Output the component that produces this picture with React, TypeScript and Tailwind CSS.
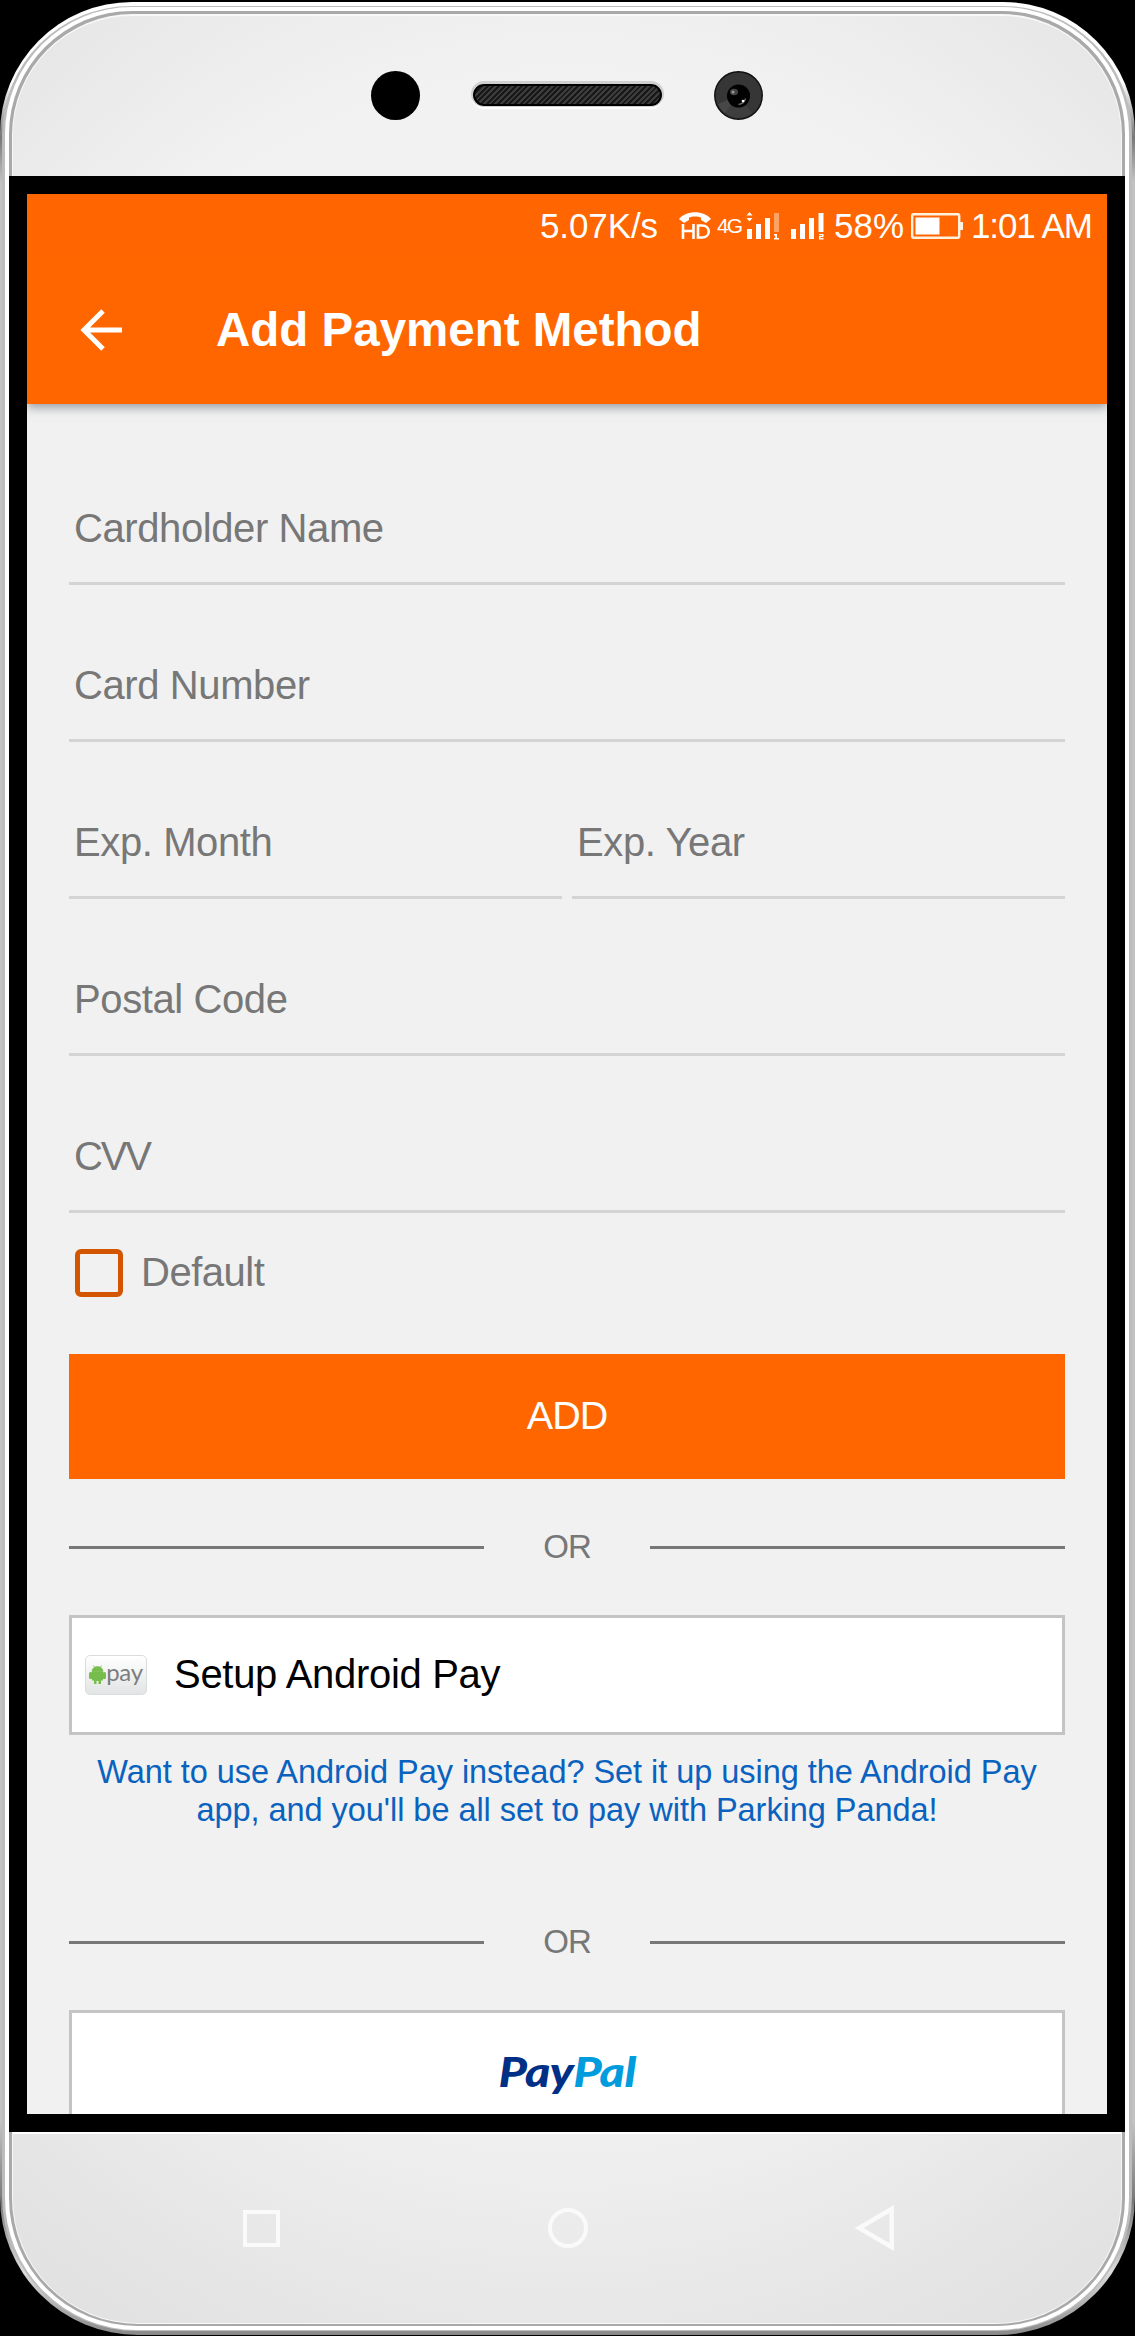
import React from "react";

function Field({ label, tight = false }: { label: string; tight?: boolean }) {
  return (
    <label className="flex h-[157px] w-full flex-col justify-end border-b-[3px] border-[#d4d4d4] pb-[34px]">
      <span
        className={
          tight
            ? "whitespace-nowrap pl-[5px] text-[40px] leading-[40px] tracking-[-2.200px] text-[#777777]"
            : "whitespace-nowrap pl-[5px] text-[40px] leading-[40px] tracking-[-0.400px] text-[#777777]"
        }
      >
        {label}
      </span>
    </label>
  );
}

function OrDivider() {
  return (
    <div className="flex h-[40px] items-center">
      <div className="h-[3px] flex-1 bg-[#777777]" />
      <span className="w-[166px] text-center text-[33px] leading-[40px] tracking-[-1px] text-[#777777]">
        OR
      </span>
      <div className="h-[3px] flex-1 bg-[#777777]" />
    </div>
  );
}

function HdCallIcon() {
  return (
    <svg width="32" height="28" viewBox="0 0 32 28">
      <path d="M0 7C7-2 25-2 32 7l-5 4-5-3V5.500C19 4 13 4 10 5.500V8l-5 3z" fill="#fff" />
      <path d="M4 12v15M14.500 12v15M4 19h10.500M19 13.500h4c9 0 9 12 0 12h-4z" fill="none" stroke="#fff" strokeWidth="2.600" />
    </svg>
  );
}

function SignalOne() {
  return (
    <svg width="33" height="28" viewBox="0 0 33 28" fill="#fff">
      <path d="M3.500 0 6.500 3.500H.5zM3.500 9.500 6.500 6H.5z" />
      <path d="M1 17h5v10H1zM10 12h5v15h-5zM19 6h5v21h-5z" />
      <path d="M28 1h5v19h-5z" opacity=".4" />
      <path d="M28 22h3v4h2v1.500h-5V26h1.200v-2.500H28z" />
    </svg>
  );
}

function SignalTwo() {
  return (
    <svg width="33" height="28" viewBox="0 0 33 28" fill="#fff">
      <path d="M0 17h5v10H0zM9 12h5v15H9zM18 6h5v21h-5zM27.500 1h5v19h-5z" />
      <path d="M28 22h4.500v3H29.500v1h3v1.500H28v-3.500h3v-.7h-3z" />
    </svg>
  );
}

function BatteryIcon() {
  return (
    <svg width="52" height="26" viewBox="0 0 52 26">
      <rect x="1.200" y="1.200" width="47" height="23.600" rx="1.500" fill="none" stroke="#fff3e0" strokeWidth="2.400" />
      <path d="M49 9h3v8h-3z" fill="#fff3e0" />
      <rect x="4.500" y="4.500" width="24" height="17" fill="#fff" />
    </svg>
  );
}

function StatusBar() {
  return (
    <div className="flex h-[63px] items-center bg-[#ff6500] pl-[513px] text-[35px] leading-[62px] text-white">
      <span className="w-[139px] whitespace-nowrap tracking-[-0.1px]">5.07K/s</span>
      <HdCallIcon />
      <span className="ml-[6px] w-[29px] whitespace-nowrap text-[21px] leading-[62px] tracking-[-2px]">4G</span>
      <SignalOne />
      <span className="w-[12px]" />
      <SignalTwo />
      <span className="ml-[10px] w-[77px] whitespace-nowrap">58%</span>
      <BatteryIcon />
      <span className="ml-[8px] whitespace-nowrap tracking-[-1.1px]">1:01 AM</span>
    </div>
  );
}

function AppBar() {
  return (
    <header className="relative z-10 bg-[#ff6600] shadow-[0_3px_10px_rgba(50,60,75,0.5)]">
      <StatusBar />
      <div className="flex h-[147px] items-center pb-px pl-[53px]">
        <svg width="43" height="42" viewBox="0 0 43 42" fill="none" stroke="#fff" strokeWidth="5">
          <path d="M42 21H4M23 2 4 21l19 19" />
        </svg>
        <h1 className="ml-[93px] whitespace-nowrap text-[47.500px] font-bold leading-[60px] text-white">
          Add Payment Method
        </h1>
      </div>
    </header>
  );
}

function AndroidPayBadge() {
  return (
    <div className="flex h-[40px] w-[62px] items-center justify-center rounded-[5px] border border-[#dadddd] bg-gradient-to-b from-white to-[#e2e5e5]">
      <svg width="17" height="20" viewBox="0 0 17 20" fill="#76bd4d">
        <path d="M3 6.500C3 0 14 0 14 6.500zM4.500.500 6 3M12.500.500 11 3" stroke="#76bd4d" strokeWidth=".8" />
        <path d="M3 7h11v8.500H12V19H9.500v-3h-2v3H5v-3.500H3z" />
        <rect x="0" y="7" width="3.500" height="7" rx="1.500" />
        <rect x="13.500" y="7" width="3.500" height="7" rx="1.500" />
      </svg>
      <span className="pb-[6px] font-['Lato'] text-[24px] leading-[22px] tracking-[-0.3px] text-[#7d7d7d]">pay</span>
    </div>
  );
}

function PaymentScreen() {
  return (
    <div className="flex h-[1920px] flex-col overflow-hidden bg-[#f1f1f1]">
      <AppBar />
      <main className="flex shrink-0 flex-col px-[42px] pt-[24px]">
        <Field label="Cardholder Name" />
        <Field label="Card Number" />
        <div className="flex gap-[10px]">
          <Field label="Exp. Month" />
          <Field label="Exp. Year" />
        </div>
        <Field label="Postal Code" />
        <Field label="CVV" tight />
        <div className="mt-[36px] flex h-[48px] items-center pl-[6px]">
          <div className="h-[48px] w-[48px] rounded-[6px] border-[5.500px] border-[#d45500]" />
          <span className="pb-[3px] pl-[18px] text-[40px] leading-[40px] tracking-[-0.5px] text-[#777777]">Default</span>
        </div>
        <button className="mt-[57px] h-[125px] bg-[#ff6600] pb-[3px] text-[39.500px] leading-[40px] tracking-[-1px] text-white">
          ADD
        </button>
        <div className="mt-[48px]">
          <OrDivider />
        </div>
        <div className="mt-[48px] flex h-[120px] items-center border-[3px] border-[#c4c4c4] bg-white pl-[13px]">
          <AndroidPayBadge />
          <span className="pb-[3px] pl-[27px] text-[40px] leading-[40px] tracking-[-0.3px] text-black">Setup Android Pay</span>
        </div>
        <p className="mt-[19px] whitespace-nowrap text-center text-[32.500px] leading-[37.500px] tracking-[-0.04px] text-[#0a62bf]">
          Want to use Android Pay instead? Set it up using the Android Pay
          <br />
          app, and you'll be all set to pay with Parking Panda!
        </p>
        <div className="mt-[93px]">
          <OrDivider />
        </div>
        <div className="mt-[48px] flex h-[120px] items-center justify-center border-[3px] border-[#c4c4c4] bg-white">
          <div className="flex scale-x-[1.18] pt-[4px] font-['Lato'] text-[41px] font-black italic leading-[50px] tracking-[-0.5px]">
            <span className="text-[#002f86]">Pay</span>
            <span className="text-[#009cde]">Pal</span>
          </div>
        </div>
      </main>
    </div>
  );
}

function Sensors() {
  return (
    <div className="flex h-[160px] items-center justify-center pb-[2px]">
      <div className="h-[49px] w-[49px] rounded-full bg-black" />
      <div className="ml-[53px] h-[22px] w-[189px] rounded-full border-2 border-black bg-[repeating-linear-gradient(135deg,#181818_0px,#181818_2px,#3c3c3c_2px,#3c3c3c_4px)] shadow-[0_-1px_0_2px_#d0d0d0,0_2px_1px_1px_#ffffff]" />
      <svg className="ml-[52px]" width="49" height="49" viewBox="0 0 49 49">
        <circle cx="24.500" cy="24.500" r="23.700" fill="#363636" stroke="#111" strokeWidth="1.500" />
        <path d="M24.500 24.500 11 42A22 22 0 0 0 38 42z" fill="#3e3e3e" />
        <path d="M24.500 24.500 11 42A22 22 0 0 1 4 33z" fill="#484848" />
        <circle cx="24.500" cy="25" r="11.500" fill="#020202" />
        <ellipse cx="20" cy="21" rx="4" ry="3.300" fill="#444" />
        <circle cx="19" cy="21" r="1.500" fill="#999" />
        <path d="M24 33q6-1 7-6l1 1q-1 5-7 6z" fill="#777" />
        <circle cx="29" cy="30" r="1.300" fill="#fff" />
      </svg>
    </div>
  );
}

function NavKeys() {
  return (
    <div className="flex h-[192px] items-center justify-between border-t-2 border-white pb-[2px] pl-[230px] pr-[227px]">
      <div className="h-[37px] w-[37px] border-[4.500px] border-[#fafafa]" />
      <div className="h-[40px] w-[40px] rounded-full border-[4px] border-[#fafafa]" />
      <svg width="39" height="46" viewBox="0 0 39 46" fill="none" stroke="#fafafa" strokeWidth="4.500">
        <path d="M36.700 4v38L4 23z" />
      </svg>
    </div>
  );
}

export default function App() {
  return (
    <div className="h-[2336px] w-[1135px] bg-black pt-[2px] font-['Liberation_Sans',Arial,sans-serif]">
      <div className="h-[2333px] rounded-t-[132px] rounded-b-[138px] bg-[linear-gradient(180deg,#ffffff_0px,#ffffff_80px,#777777_135px,#c2c2c2_180px,#c2c2c2_2120px,#777777_2200px,#dddddd_2270px,#888888_2333px)] pb-[4px] pl-[2px] pr-[3px] pt-[4px]">
        <div className="h-full rounded-t-[129px] rounded-b-[135px] bg-[#bcbcbc] px-[3px] pb-px pt-px">
          <div className="h-full rounded-t-[127px] rounded-b-[132px] bg-white px-[4px] pb-[4px] pt-[4px]">
            <div className="h-full rounded-t-[123px] rounded-b-[128px] bg-[#a9a9a9] px-[3px] pb-[2px] pt-[3px]">
              <div className="h-full rounded-t-[121px] rounded-b-[126px] bg-[#f8f8f8] px-px pb-px pt-[2px]">
                <div className="h-full rounded-t-[119px] rounded-b-[125px] bg-[radial-gradient(ellipse_95%_62%_at_50%_46%,#f4f4f4_0%,#f2f2f2_70%,#ebebeb_81%,#e4e4e4_92%,#dfdfdf_105%)]">
                  <Sensors />
                  <div className="-mx-[4px] bg-black p-[18px]">
                    <PaymentScreen />
                  </div>
                  <NavKeys />
                </div>
              </div>
            </div>
          </div>
        </div>
      </div>
    </div>
  );
}
